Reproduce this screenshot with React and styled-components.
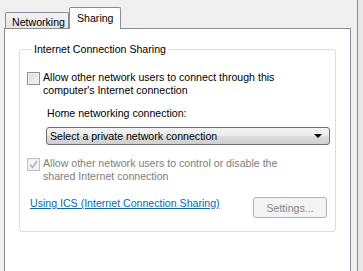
import React from 'react';
import styled, { createGlobalStyle } from 'styled-components';

const Global = createGlobalStyle`
  html, body {
    margin: 0;
    background: #f0f0f0;
  }
  body {
    font-family: "Liberation Sans", Arial, sans-serif;
    font-size: 10.6px;
    color: #000;
  }
`;

const Page = styled.div`
  width: 363px;
  height: 271px;
  overflow: hidden;
  display: flex;
  background: #f0f0f0;
`;

const Main = styled.div`
  width: 351px;
  display: flex;
  flex-direction: column;
`;

const Edge = styled.div`
  flex: 1;
  margin-left: 6px;
  border-left: 1px solid #8c8c8c;
  background: #e9e9e9;
`;

const TabStrip = styled.div`
  height: 28px;
  padding-left: 5px;
  display: flex;
  align-items: flex-end;
`;

const Tab = styled.div`
  box-sizing: border-box;
  position: relative;
  z-index: ${p => (p.$active ? 2 : 1)};
  width: ${p => p.$w}px;
  height: ${p => (p.$active ? 22 : 16)}px;
  margin-bottom: ${p => (p.$active ? -1 : 0)}px;
  padding: ${p => (p.$active ? '4px 0 0 7px' : '3px 0 0 6px')};
  border: 1px solid #898c95;
  border-bottom: none;
  border-radius: 2px 2px 0 0;
  background: ${p => (p.$active ? '#fff' : 'linear-gradient(#f3f3f3, #e4e4e4)')};
  line-height: 12px;
  white-space: nowrap;
`;

const Panel = styled.div`
  flex: 1;
  margin-left: 4px;
  border: 1px solid #898c95;
  border-bottom: none;
  background: #fff;
  padding: 14px 14px 0 14px;
`;

const Group = styled.fieldset`
  margin: 0;
  padding: 15px 8px 13px 7px;
  border: 1px solid #d5dfe5;
  border-radius: 3px;
  min-width: 0;
  width: 300px;
`;

const Legend = styled.legend`
  margin-left: 4px;
  padding: 0 3px 0 3px;
  line-height: 13px;
`;

const CheckRow = styled.div`
  display: flex;
  align-items: flex-start;
  gap: 3px;
  margin-bottom: ${p => p.$mb || 0}px;
  color: ${p => (p.$disabled ? '#7d7d7d' : '#000')};
`;

const Box = styled.span`
  box-sizing: border-box;
  flex: none;
  width: 13px;
  height: 13px;
  margin-top: 1px;
  border: 1px solid ${p => (p.$disabled ? '#c3c3c3' : '#8f8f8f')};
  background: ${p => (p.$disabled ? '#f4f4f4' : 'linear-gradient(135deg, #d9d9d9, #f6f6f6)')};
  box-shadow: inset 0 0 0 1px ${p => (p.$disabled ? '#f0f0f0' : '#f2f2f2')};
  display: flex;
  align-items: center;
  justify-content: center;
`;

const CheckText = styled.div`
  line-height: 13px;
`;

const Label = styled.div`
  margin-left: 20px;
  line-height: 13px;
  margin-bottom: 7px;
`;

const Select = styled.div`
  box-sizing: border-box;
  margin-left: 19px;
  margin-bottom: 12px;
  width: 284px;
  height: 18px;
  padding: 0 7px 0 3px;
  border: 1px solid #707070;
  border-radius: 3px;
  background: linear-gradient(#f2f2f2 0%, #ebebeb 50%, #dddddd 51%, #cfcfcf 100%);
  display: flex;
  align-items: center;
  justify-content: space-between;
  line-height: 13px;
`;

const Arrow = styled.span`
  width: 0;
  height: 0;
  border-left: 4px solid transparent;
  border-right: 4px solid transparent;
  border-top: 4px solid #000;
`;

const Bottom = styled.div`
  margin-top: 14px;
  display: flex;
  justify-content: space-between;
  align-items: flex-start;
`;

const Link = styled.a`
  margin-left: 3px;
  color: #0066cc;
  text-decoration: underline;
  line-height: 13px;
  cursor: pointer;
`;

const Button = styled.button`
  box-sizing: border-box;
  width: 74px;
  height: 21px;
  padding: 0;
  border: 1px solid #adb2b5;
  border-radius: 3px;
  background: #f4f4f4;
  color: #838383;
  font: inherit;
`;

const Tick = () => (
  <svg width="9" height="9" viewBox="0 0 9 9">
    <path d="M1 4.5 L3.5 7.5 L8 1" fill="none" stroke="#b5b5b5" strokeWidth="1.6" />
  </svg>
);

const App = () => {
  return (
    <Page>
      <Global />
      <Main>
        <TabStrip>
          <Tab $w={64}>Networking</Tab>
          <Tab $w={52} $active>Sharing</Tab>
        </TabStrip>
        <Panel>
          <Group>
            <Legend>Internet Connection Sharing</Legend>
            <CheckRow $mb={10}>
              <Box />
              <CheckText>
                Allow other network users to connect through this
                <br />
                computer's Internet connection
              </CheckText>
            </CheckRow>
            <Label>Home networking connection:</Label>
            <Select>
              <span>Select a private network connection</span>
              <Arrow />
            </Select>
            <CheckRow $disabled>
              <Box $disabled>
                <Tick />
              </Box>
              <CheckText>
                Allow other network users to control or disable the
                <br />
                shared Internet connection
              </CheckText>
            </CheckRow>
            <Bottom>
              <Link>Using ICS (Internet Connection Sharing)</Link>
              <Button disabled>Settings...</Button>
            </Bottom>
          </Group>
        </Panel>
      </Main>
      <Edge />
    </Page>
  );
};

export default App;
